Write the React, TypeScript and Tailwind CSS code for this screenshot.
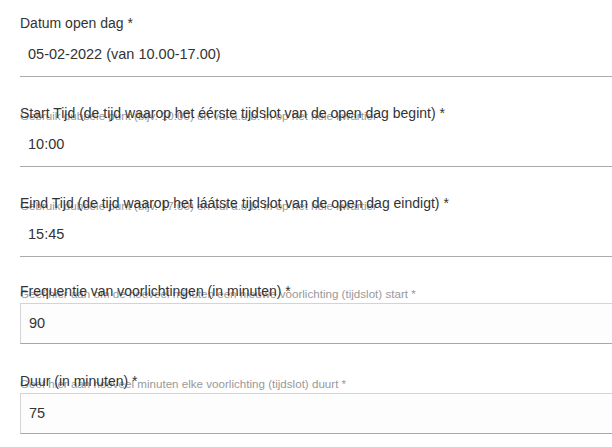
const fields = [
  {
    label: "Datum open dag *",
    value: "05-02-2022 (van 10.00-17.00)",
    kind: "line",
  },
  {
    label: "Start Tijd (de tijd waarop het éérste tijdslot van de open dag begint) *",
    hint: "Gebruik dubbele punt (bijv. 10:00) en vul a.u.b. in op het hele kwartier",
    value: "10:00",
    kind: "line",
  },
  {
    label: "Eind Tijd (de tijd waarop het láátste tijdslot van de open dag eindigt) *",
    hint: "Gebruik dubbele punt (bijv. 17:00) en vul a.u.b. in op het hele kwartier",
    value: "15:45",
    kind: "line",
  },
  {
    label: "Frequentie van voorlichtingen (in minuten) *",
    hint: "Geef hier aan om de hoeveel minuten een nieuwe voorlichting (tijdslot) start *",
    value: "90",
    kind: "box",
  },
  {
    label: "Duur (in minuten) *",
    hint: "Geef hier aan hoeveel minuten elke voorlichting (tijdslot) duurt *",
    value: "75",
    kind: "box",
  },
];

export default function App() {
  return (
    <div className="w-[612px] h-[447px] overflow-hidden bg-white pl-[20px] pt-[11px] font-['Liberation_Sans',Arial,sans-serif] text-[#333]">
      <div className="flex flex-col">
        {fields.map((f, i) => (
          <div
            key={f.label}
            className={`flex flex-col ${i === 0 ? "" : i === 3 ? "mt-[22px]" : i === 4 ? "mt-[25px]" : "mt-[24px]"}`}
          >
            {/* label + hint that overlaps it */}
            <div className="relative h-[15px]">
              <span className="relative z-10 text-[14px] leading-[15px] whitespace-nowrap">
                {f.label}
              </span>
              {f.hint && (
                <span className="absolute left-0 top-[8px] text-[11.6px] leading-[13px] text-[#999] whitespace-nowrap">
                  {f.hint}
                </span>
              )}
            </div>

            {f.kind === "line" ? (
              <div className="mt-[20px] w-[620px] border-b border-[#ababab] pb-[14px] pl-[8px] text-[14.5px] leading-[16px]">
                {f.value}
              </div>
            ) : (
              <div className="mt-[9px] h-[41px] w-[620px] border-l border-t border-b border-l-[#d4d4d4] border-t-[#d4d4d4] border-b-[#a8a8a8] bg-[#fdfdfd] pl-[8px] pt-[11px] text-[14.5px] leading-[16px]">
                {f.value}
              </div>
            )}
          </div>
        ))}
      </div>
    </div>
  );
}
